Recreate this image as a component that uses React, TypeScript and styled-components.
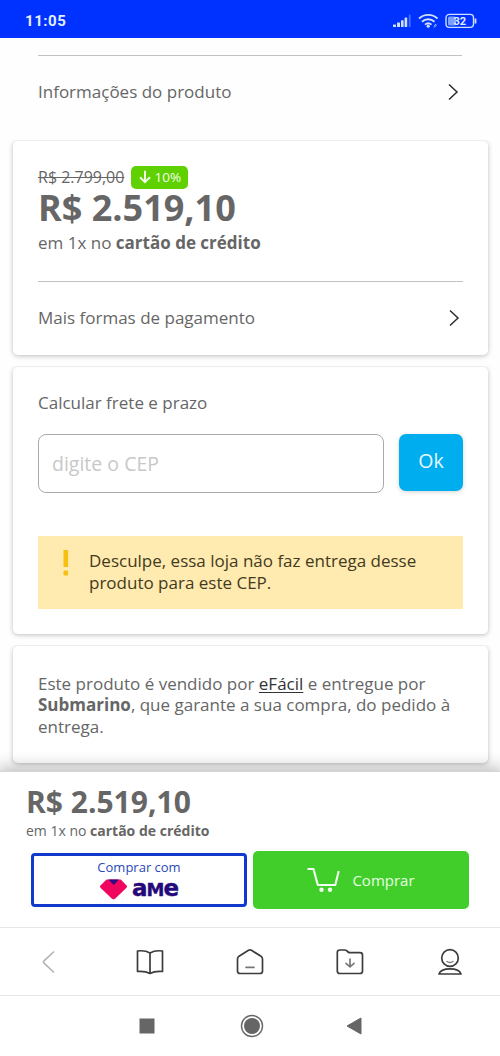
import React from "react";
import styled, { createGlobalStyle } from "styled-components";

const GlobalStyle = createGlobalStyle`
  * { box-sizing: border-box; }
  body {
    margin: 0;
    background: #fefefe;
    font-family: "Open Sans", "Noto Sans", sans-serif;
    font-stretch: 90%;
    color: #666;
  }
`;

const Screen = styled.div`
  width: 500px;
  height: 1056px;
  display: flex;
  flex-direction: column;
  overflow: hidden;
`;

const StatusBar = styled.header`
  flex: none;
  height: 38px;
  padding: 3px 22px 0 25px;
  display: flex;
  align-items: center;
  justify-content: space-between;
  background: #0032ff;
  color: #e4eeff;
`;

const Clock = styled.span`
  font: 700 15px/20px Roboto, sans-serif;
  letter-spacing: 0.55px;
`;

const Content = styled.main`
  flex: none;
  height: 733px;
  padding-top: 17px;
  overflow: hidden;
`;

const InfoSection = styled.section`
  height: 86px;
  padding: 0 38px;
`;

const Divider = styled.div`
  height: 1px;
  background: #c2c2c2;
`;

const LinkRow = styled.div<{ $height: number }>`
  height: ${(p) => p.$height}px;
  display: flex;
  align-items: center;
  justify-content: space-between;
  padding-right: 3px;
`;

const Card = styled.section<{ $height: number; $top: number }>`
  height: ${(p) => p.$height}px;
  margin: 0 12px 12px 13px;
  padding: ${(p) => p.$top}px 25px 0;
  border-radius: 5px;
  background: #fff;
  box-shadow: 0 1px 5px rgba(0, 0, 0, 0.26);
  clip-path: inset(-1px -6px -8px -6px);
`;

const Text = styled.span<{ $size: number; $line?: number; $track?: number; $weight?: number }>`
  display: block;
  white-space: nowrap;
  font-size: ${(p) => p.$size}px;
  font-weight: ${(p) => p.$weight ?? 400};
  line-height: ${(p) => p.$line ?? 30}px;
  letter-spacing: ${(p) => p.$track ?? 0}px;
`;

const OldPriceRow = styled.div`
  height: 23px;
  display: flex;
  align-items: center;
  gap: 7px;
`;

const OldPrice = styled(Text)`
  text-decoration: line-through;
`;

const Discount = styled.span`
  width: 57px;
  height: 23px;
  margin-top: 1px;
  border-radius: 5px;
  background: #5fd000;
  color: #f2ffe8;
  display: flex;
  align-items: center;
  justify-content: center;
  gap: 4px;
`;

const PaymentDivider = styled(Divider)`
  margin-top: 23px;
`;

const CepForm = styled.div`
  display: flex;
  justify-content: space-between;
  margin-top: 16px;
`;

const CepInput = styled.div`
  width: 346px;
  height: 59px;
  padding: 0 13px;
  border: 1.5px solid #aaa;
  border-radius: 8px;
  display: flex;
  align-items: center;
  color: #c8c8c8;
`;

const OkButton = styled.div`
  width: 64px;
  height: 57px;
  border-radius: 7px;
  background: #00aeef;
  color: #e8f9ff;
  display: flex;
  align-items: center;
  justify-content: center;
  padding-bottom: 3px;
  box-shadow: 0 1px 4px rgba(0, 0, 0, 0.18);
`;

const Alert = styled.div`
  height: 73px;
  margin-top: 43px;
  padding: 14px 0 0 25px;
  background: #ffeab0;
  color: #433a20;
  display: flex;
  gap: 20px;
`;

const SellerLink = styled.a`
  color: #333;
  text-decoration: underline;
  text-underline-offset: 2px;
`;

const BuyBar = styled.section`
  flex: none;
  position: relative;
  height: 156px;
  padding: 14px 31px 0 26px;
  background: #fff;
  box-shadow: 0 0 16px 3px rgba(0, 0, 0, 0.28);
  border-top: 1px solid #d6d6d6;
`;

const Buttons = styled.div`
  display: flex;
  align-items: center;
  gap: 6px;
  margin: 8px 0 0 5px;
`;

const AmeButton = styled.div`
  width: 216px;
  height: 54px;
  border: 3px solid #1238cc;
  border-radius: 4px;
  display: flex;
  flex-direction: column;
  align-items: center;
  color: #2a48b8;
`;

const AmeLogo = styled.div`
  display: flex;
  align-items: center;
  gap: 5px;
  height: 22px;
`;

const AmeWord = styled.span`
  font: 700 23px/20px "DejaVu Sans", sans-serif;
  letter-spacing: -1px;
  color: #25087a;
  -webkit-text-stroke: 0.4px #25087a;
`;

const SmallCap = styled.span`
  font-size: 18px;
`;

const BuyButton = styled.div`
  width: 216px;
  height: 58px;
  border-radius: 5px;
  background: #41ce2a;
  color: #e8ffe2;
  display: flex;
  align-items: center;
  justify-content: center;
  gap: 12px;
`;

const BrowserNav = styled.nav`
  flex: none;
  position: relative;
  height: 68px;
  border-top: 1px solid #e6e6e6;
  background: #fff;
  display: grid;
  grid-template-columns: repeat(5, 1fr);
  place-items: center;
`;

const SystemNav = styled.nav`
  flex: none;
  position: relative;
  height: 61px;
  border-top: 1px solid #e6e6e6;
  background: #fff;
  display: flex;
  align-items: center;
  justify-content: center;
  gap: 82px;
`;

const Chevron = () => (
  <svg width="11" height="18" viewBox="0 0 11 18" fill="none" stroke="#2b2b2b" strokeWidth="1.5">
    <path d="M1 1.5 9 9 1 16.5" />
  </svg>
);

const StatusIcons = () => (
  <svg width="86" height="18" viewBox="0 0 86 18" fill="none">
    <g fill="#cfe0ff">
      <rect x="1" y="12.5" width="3" height="2.5" rx=".6" />
      <rect x="5" y="10.5" width="3" height="4.5" rx=".6" />
      <rect x="9" y="8.2" width="2.6" height="6.8" rx=".6" />
      <rect x="12.6" y="5.5" width="2.6" height="9.5" rx=".6" />
      <rect x="16.8" y="2.5" width="1.8" height="12.5" rx=".6" opacity=".35" />
    </g>
    <g stroke="#cfe0ff" strokeWidth="1.9">
      <path d="M27 6.5a13.5 13.5 0 0 1 18.5 0" />
      <path d="M30 9.8a9 9 0 0 1 12.5 0" />
      <path d="M33 12.6a5 5 0 0 1 6.5 0" />
    </g>
    <circle cx="36.2" cy="14.2" r="1.6" fill="#cfe0ff" />
    <path d="m41.8 15.5 3-2.5m-3 1 2.2-2" stroke="#9fbcff" strokeWidth="1" />
    <rect x="54" y="2.4" width="27.5" height="13" rx="3.4" stroke="#cfe0ff" strokeWidth="1.4" />
    <rect x="56" y="4.4" width="8" height="9" rx="1.5" fill="#7da0ff" />
    <path d="M83.5 6.5v5" stroke="#cfe0ff" strokeWidth="1.8" />
    <text x="67.8" y="12.9" textAnchor="middle" fill="#e4eeff" fontFamily="Roboto, sans-serif" fontWeight="700" fontSize="11">32</text>
  </svg>
);

const ArrowDown = () => (
  <svg width="12" height="14" viewBox="0 0 12 14" fill="none" stroke="#f2ffe8" strokeWidth="2">
    <path d="M6 0.8v11M1 7.2l5 5 5-5" />
  </svg>
);

const Exclamation = () => (
  <svg width="6" height="27" viewBox="0 0 6 27" fill="#f6bf12">
    <rect x=".5" y="0" width="4.6" height="17" rx=".5" />
    <rect x=".5" y="20.5" width="4.6" height="5" rx="1.2" />
  </svg>
);

const AmeHeart = () => (
  <svg width="27" height="21" viewBox="0 0 27 21">
    <path d="M6.5.5h14.3L27 7c0 1-.3 1.6-1 2.300L15.300 19.600q-1.800 1.600-3.600 0L1 9.300C.3 8.600 0 8 0 7Z" fill="#f0055f" />
    <path d="M8.500.5h10.300L13.700 6Z" fill="#2d0a86" />
  </svg>
);

const Cart = () => (
  <svg width="33" height="26" viewBox="0 0 33 26" fill="none" stroke="#f2fff0" strokeWidth="2.100" strokeLinejoin="round">
    <path d="M.5 2h6l4.300 16h17.500L31.700 4" />
    <circle cx="14.500" cy="22.700" r="2.200" fill="#f2fff0" stroke="none" />
    <circle cx="23" cy="22.700" r="2.200" fill="#f2fff0" stroke="none" />
  </svg>
);

const lineIcon = { width: 30, height: 30, viewBox: "0 0 30 30", fill: "none", stroke: "#3c3c3c", strokeWidth: 1.7, strokeLinejoin: "round" as const, strokeLinecap: "round" as const };

const BackIcon = () => (
  <svg {...lineIcon} stroke="#b5b5b5">
    <path d="M18.500 5 9 13.800q-1.200 1.200 0 2.400L18.500 25" />
  </svg>
);

const BookIcon = () => (
  <svg {...lineIcon}>
    <path d="M2.500 4q7.500-1 12.500 2 5-3 12.500-2v20.500q-8-.6-12.500 2-4.500-2.600-12.500-2ZM15 6v20" />
  </svg>
);

const HomeIcon = () => (
  <svg {...lineIcon}>
    <path d="M2.500 12q0-1.800 1.500-2.700l9.500-6q1.500-.8 3 0l9.500 6q1.500.9 1.500 2.700v12q0 2.500-2.500 2.500H5q-2.500 0-2.500-2.500Z" />
    <path d="M11 20.300h8" stroke="#777" />
  </svg>
);

const FolderIcon = () => (
  <svg {...lineIcon}>
    <path d="M2.300 5.500q0-2.500 2.500-2.500h5q1 0 1.800.7l1.500 1.300q.8.700 1.800.7H25q2.500 0 2.500 2.500V24q0 2.500-2.500 2.500H4.800q-2.500 0-2.500-2.500Z" />
    <path d="M15 12v7.500M11 16.300l4 3.500 4-3.500" stroke="#777" />
  </svg>
);

const PersonIcon = () => (
  <svg {...lineIcon}>
    <circle cx="15" cy="11" r="8.300" />
    <path d="M12 14.500q3 2 6 0" stroke="#777" strokeWidth="1.400" />
    <path d="M4 27q1.500-5.200 11-5.200T26 27Z" />
  </svg>
);

export default function App() {
  return (
    <Screen>
      <GlobalStyle />
      <StatusBar>
        <Clock>11:05</Clock>
        <StatusIcons />
      </StatusBar>
      <Content>
        <InfoSection>
          <Divider />
          <LinkRow $height={71}>
            <Text $size={17}>Informações do produto</Text>
            <Chevron />
          </LinkRow>
        </InfoSection>

        <Card $height={214} $top={24}>
          <OldPriceRow>
            <OldPrice $size={16}>R$ 2.799,00</OldPrice>
            <Discount>
              <ArrowDown />
              <Text $size={13.5} $line={20}>10%</Text>
            </Discount>
          </OldPriceRow>
          <Text $size={36} $line={40} $weight={700}>R$ 2.519,10</Text>
          <Text $size={17}>em 1x no <b>cartão de crédito</b></Text>
          <PaymentDivider />
          <LinkRow $height={72}>
            <Text $size={17}>Mais formas de pagamento</Text>
            <Chevron />
          </LinkRow>
        </Card>

        <Card $height={267} $top={21}>
          <Text $size={17}>Calcular frete e prazo</Text>
          <CepForm>
            <CepInput><Text $size={19.500}>digite o CEP</Text></CepInput>
            <OkButton><Text $size={19.500}>Ok</Text></OkButton>
          </CepForm>
          <Alert>
            <Exclamation />
            <div>
              <Text $size={17} $line={21.500}>Desculpe, essa loja não faz entrega desse</Text>
              <Text $size={17} $line={21.500}>produto para este CEP.</Text>
            </div>
          </Alert>
        </Card>

        <Card $height={117} $top={27}>
          <Text $size={17} $line={21.300}>Este produto é vendido por <SellerLink>eFácil</SellerLink> e entregue por</Text>
          <Text $size={17} $line={21.300}><b>Submarino</b>, que garante a sua compra, do pedido à</Text>
          <Text $size={17} $line={21.300}>entrega.</Text>
        </Card>
      </Content>

      <BuyBar>
        <Text $size={30} $line={32} $weight={700}>R$ 2.519,10</Text>
        <Text $size={14} $line={25}>em 1x no <b>cartão de crédito</b></Text>
        <Buttons>
          <AmeButton>
            <Text $size={13} $line={22}>Comprar com</Text>
            <AmeLogo>
              <AmeHeart />
              <AmeWord>a<SmallCap>M</SmallCap>e</AmeWord>
            </AmeLogo>
          </AmeButton>
          <BuyButton>
            <Cart />
            <Text $size={15} $line={20}>Comprar</Text>
          </BuyButton>
        </Buttons>
      </BuyBar>

      <BrowserNav>
        <BackIcon />
        <BookIcon />
        <HomeIcon />
        <FolderIcon />
        <PersonIcon />
      </BrowserNav>
      <SystemNav>
        <svg width="22" height="24" viewBox="0 0 22 24"><rect x="3.500" y="4.500" width="15" height="15" fill="#666" /></svg>
        <svg width="24" height="24" viewBox="0 0 24 24"><circle cx="12" cy="12" r="10.500" fill="none" stroke="#666" strokeWidth="1.400" /><circle cx="12" cy="12" r="8" fill="#666" /></svg>
        <svg width="18" height="24" viewBox="0 0 18 24"><path d="M1 12 15 4v16Z" fill="#666" stroke="#666" strokeLinejoin="round" /></svg>
      </SystemNav>
    </Screen>
  );
}
